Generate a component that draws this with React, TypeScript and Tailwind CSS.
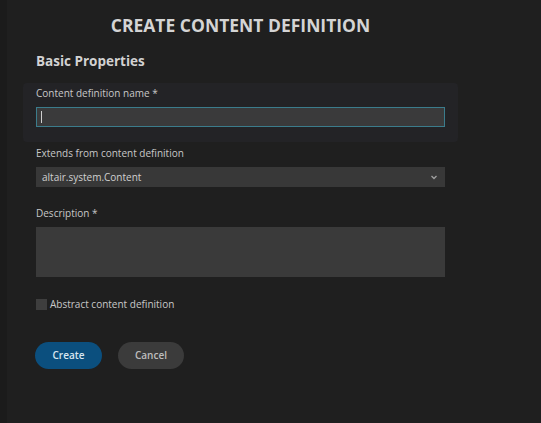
import React from 'react';

const App: React.FC = () => {
  return (
    <div className="w-[541px] h-[423px] bg-[#1f1f1f] border-l-[7px] border-[#1b1b1b] overflow-hidden" style={{ fontFamily: '"Open Sans", "Noto Sans", sans-serif' }}>
      <div className="w-[409px] ml-[29px]">
        <h1 className="pt-[13px] h-[36px] leading-[24px] text-center text-[17.5px] font-bold text-[#d4d4d4]">
          CREATE CONTENT DEFINITION
        </h1>
        <h2 className="mt-[15px] h-[20px] leading-[20px] text-[13.5px] font-bold text-[#d2d2d2]">Basic Properties</h2>

        <div className="mt-[12px] -mx-[13px] px-[13px] pt-[3px] h-[59px] bg-[#232326] rounded-sm">
          <label className="block h-[14px] leading-[14px] text-[10px] text-[#c8c8c8]">Content definition name *</label>
          <div className="mt-[7px] h-[20px] bg-[#3a3a3b] border border-[#3b7c8c] flex items-center pl-[4px]">
            <span className="w-px h-[12px] bg-[#cfcfcf]"></span>
          </div>
        </div>

        <label className="block mt-[4px] h-[14px] leading-[14px] text-[10px] text-[#c8c8c8]">Extends from content definition</label>
        <div className="mt-[7px] h-[20px] bg-[#383838] flex items-center justify-between px-[6px]">
          <span className="text-[10px] text-[#d0d0d0]">altair.system.Content</span>
          <svg width="8" height="6" viewBox="0 0 8 6" className="mr-[1px]">
            <path d="M1.5 2 L4 4.5 L6.5 2" fill="none" stroke="#a0a0a0" strokeWidth="1.3" />
          </svg>
        </div>

        <label className="block mt-[19px] h-[14px] leading-[14px] text-[10px] text-[#c8c8c8]">Description *</label>
        <div className="mt-[7px] h-[50px] bg-[#3a3a3a]"></div>

        <div className="mt-[20px] flex items-center gap-[3px]">
          <span className="w-[11px] h-[11px] bg-[#3e3e3e]"></span>
          <span className="text-[10px] leading-[14px] text-[#c8c8c8]">Abstract content definition</span>
        </div>

        <div className="mt-[31px] flex gap-[16px]">
          <button className="-ml-px w-[67px] h-[27px] rounded-full bg-[#0b4f7e] text-[10px] font-semibold text-[#d8e6f0]">Create</button>
          <button className="w-[66px] h-[27px] rounded-full bg-[#3b3b3b] text-[10px] font-semibold text-[#bdbdbd]">Cancel</button>
        </div>
      </div>
    </div>
  );
};

export default App;
